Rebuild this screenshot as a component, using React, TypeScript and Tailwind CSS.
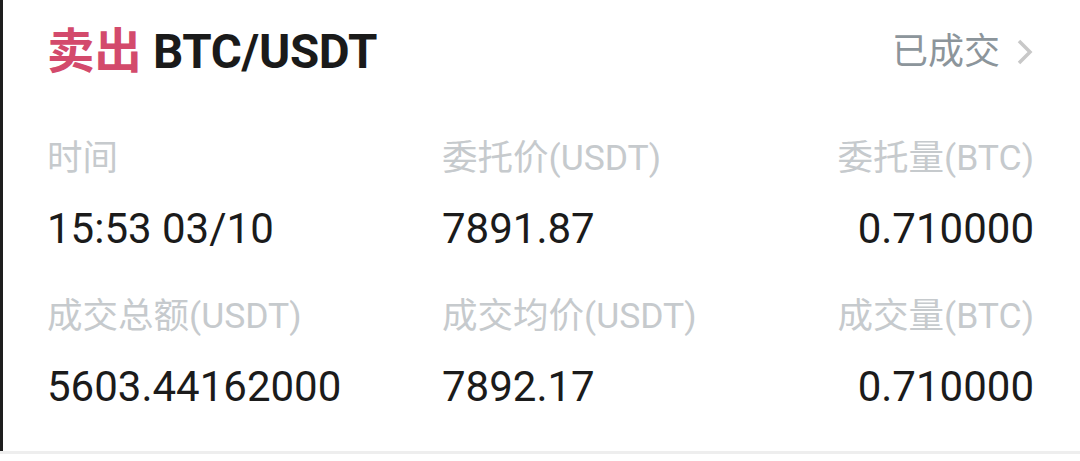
const font = { fontFamily: 'Roboto, "Noto Sans CJK SC", sans-serif' };

function Cell({ label, value, align = 'left' }: { label: string; value: string; align?: 'left' | 'right' }) {
  return (
    <div className={align === 'right' ? 'flex-1 text-right' : ''}>
      <p className="text-[35.5px] leading-[40px] text-[#c6cacd]">{label}</p>
      <p className="mt-[31px] text-[42px] leading-[40px] text-[#1b1b1b]">{value}</p>
    </div>
  );
}

function Row({ items }: { items: [string, string][] }) {
  return (
    <div className="flex">
      <div className="w-[395px]">
        <Cell label={items[0][0]} value={items[0][1]} />
      </div>
      <div className="w-[300px]">
        <Cell label={items[1][0]} value={items[1][1]} />
      </div>
      <Cell label={items[2][0]} value={items[2][1]} align="right" />
    </div>
  );
}

export default function App() {
  return (
    <div style={font} className="h-[461px] w-[1080px] bg-white overflow-hidden">
      <div className="h-[451px] border-l-[3px] border-[#1e1e1e] pl-[44px] pr-[46px]">
        <div className="flex items-center justify-between pt-[21px] h-[82px]">
          <h1 className="text-[47.5px] leading-[54px] font-bold tracking-[-0.3px]">
            <span className="text-[#d34a6c]">卖出</span>
            <span className="text-[#1a1a1a]"> BTC/USDT</span>
          </h1>
          <div className="flex items-center gap-[16px]">
            <span className="text-[36px] leading-[40px] text-[#8c959b]">已成交</span>
            <svg width="18" height="28" viewBox="0 0 18 28" className="text-[#c8c8c8]">
              <polyline points="3,3 14,14 3,25" fill="none" stroke="currentColor" strokeWidth="3.5" />
            </svg>
          </div>
        </div>
        <div className="mt-[56px]">
          <Row
            items={[
              ['时间', '15:53 03/10'],
              ['委托价(USDT)', '7891.87'],
              ['委托量(BTC)', '0.710000'],
            ]}
          />
        </div>
        <div className="mt-[47px]">
          <Row
            items={[
              ['成交总额(USDT)', '5603.44162000'],
              ['成交均价(USDT)', '7892.17'],
              ['成交量(BTC)', '0.710000'],
            ]}
          />
        </div>
      </div>
      <div className="h-[3px] bg-[#eeeeee]" />
    </div>
  );
}
